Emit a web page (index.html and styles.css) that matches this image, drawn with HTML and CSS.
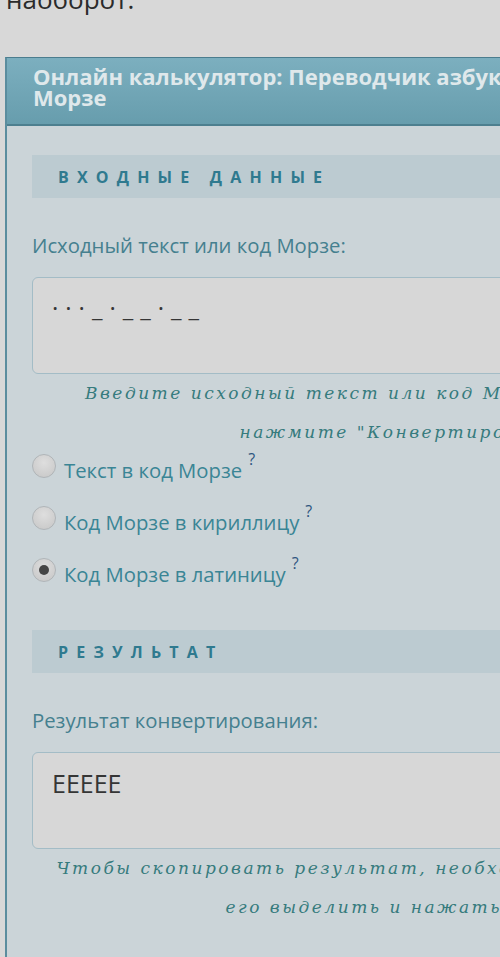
FILE: index.html
```html
<!DOCTYPE html>
<html lang="ru">
<head>
<meta charset="utf-8">
<title>Переводчик азбуки Морзе</title>
<link rel="stylesheet" href="styles.css">
</head>
<body>
<div class="page">
  <p class="intro">наоборот.</p>
  <section class="card">
    <header class="card-head">
      <h1 class="card-title">Онлайн калькулятор: Переводчик азбуки<br>Морзе</h1>
    </header>
    <div class="card-body">
      <h2 class="section-title">Входные данные</h2>
      <label class="field-label">Исходный текст или код Морзе:</label>
      <div class="textbox morse">···_·__·__</div>
      <p class="hint">Введите исходный текст или код Морзе в поле ввода и<br>нажмите "Конвертировать"</p>
      <div class="options">
        <div class="option"><span class="radio"></span><span class="opt-text">Текст в код Морзе</span><sup class="help">?</sup></div>
        <div class="option"><span class="radio"></span><span class="opt-text">Код Морзе в кириллицу</span><sup class="help">?</sup></div>
        <div class="option"><span class="radio checked"></span><span class="opt-text">Код Морзе в латиницу</span><sup class="help">?</sup></div>
      </div>
      <h2 class="section-title result-title">Результат</h2>
      <label class="field-label">Результат конвертирования:</label>
      <div class="textbox">EEEEE</div>
      <p class="hint">Чтобы скопировать результат, необходимо мышью сначала<br>его выделить и нажать Ctrl+C</p>
    </div>
  </section>
</div>
</body>
</html>
```

FILE: styles.css
```css
html, body {
  margin: 0;
  padding: 0;
  background: #d8d8d8;
  overflow: hidden;
}
.page {
  width: 500px;
  height: 957px;
  overflow: hidden;
  font-family: "Open Sans", "DejaVu Sans", sans-serif;
}
.intro {
  margin: -19px 0 0 6px;
  font-size: 26px;
  line-height: 36px;
  color: #2b2b2b;
}
.card {
  margin: 40px 0 0 5px;
  width: 1000px;
  border-left: 2px solid #5b8d9e;
  border-top: 1px solid #4b7d8e;
  background: #cbd4d8;
  min-height: 900px;
}
.card-head {
  background: linear-gradient(#7cafbf, #679dad);
  border-bottom: 2px solid #4d7f8f;
  padding: 8px 0 16px 26px;
}
.card-title {
  margin: 0;
  font-size: 22px;
  line-height: 21px;
  font-weight: 700;
  color: #dfe8eb;
}
.card-body {
  padding: 29px 0 0 25px;
}
.section-title {
  margin: 0;
  height: 43px;
  display: flex;
  align-items: center;
  padding-left: 26px;
  background: #bccbd1;
  font-size: 16px;
  font-weight: 700;
  letter-spacing: 8.2px;
  text-transform: uppercase;
  color: #2f7a8f;
}
.field-label {
  display: block;
  margin-top: 34px;
  font-size: 20.3px;
  line-height: 26px;
  color: #45808f;
}
.textbox {
  margin-top: 19px;
  box-sizing: border-box;
  height: 97px;
  padding: 15px 19px;
  background: #d7d7d7;
  border: 1px solid #a3bcc6;
  border-radius: 6px;
  font-size: 25px;
  line-height: 30px;
  color: #353535;
}
.morse {
  font-size: 24px;
  letter-spacing: 7px;
}
.hint {
  margin: 0;
  width: 747px;
  text-align: center;
  font-family: "DejaVu Serif", serif;
  font-style: italic;
  font-size: 17px;
  line-height: 39px;
  letter-spacing: 2.5px;
  color: #367b7d;
}
.options {
  margin-top: 5px;
  display: flex;
  flex-direction: column;
  gap: 26px;
}
.option {
  display: flex;
  align-items: flex-start;
  font-size: 20.3px;
  line-height: 26px;
  color: #3a8595;
}
.radio {
  box-sizing: border-box;
  width: 24px;
  height: 24px;
  margin-top: -3px;
  margin-right: 8px;
  border-radius: 50%;
  border: 1px solid #b0b5b8;
  background: radial-gradient(circle at 50% 35%, #dedede, #c6c6c6);
  display: flex;
  align-items: center;
  justify-content: center;
}
.radio.checked::after {
  content: "";
  width: 10px;
  height: 10px;
  border-radius: 50%;
  background: #464646;
}
.help {
  margin-left: 6px;
  font-size: 16px;
  line-height: 16px;
  position: relative;
  top: -6px;
  color: #2f5580;
}
.result-title {
  margin-top: 43px;
}
```
